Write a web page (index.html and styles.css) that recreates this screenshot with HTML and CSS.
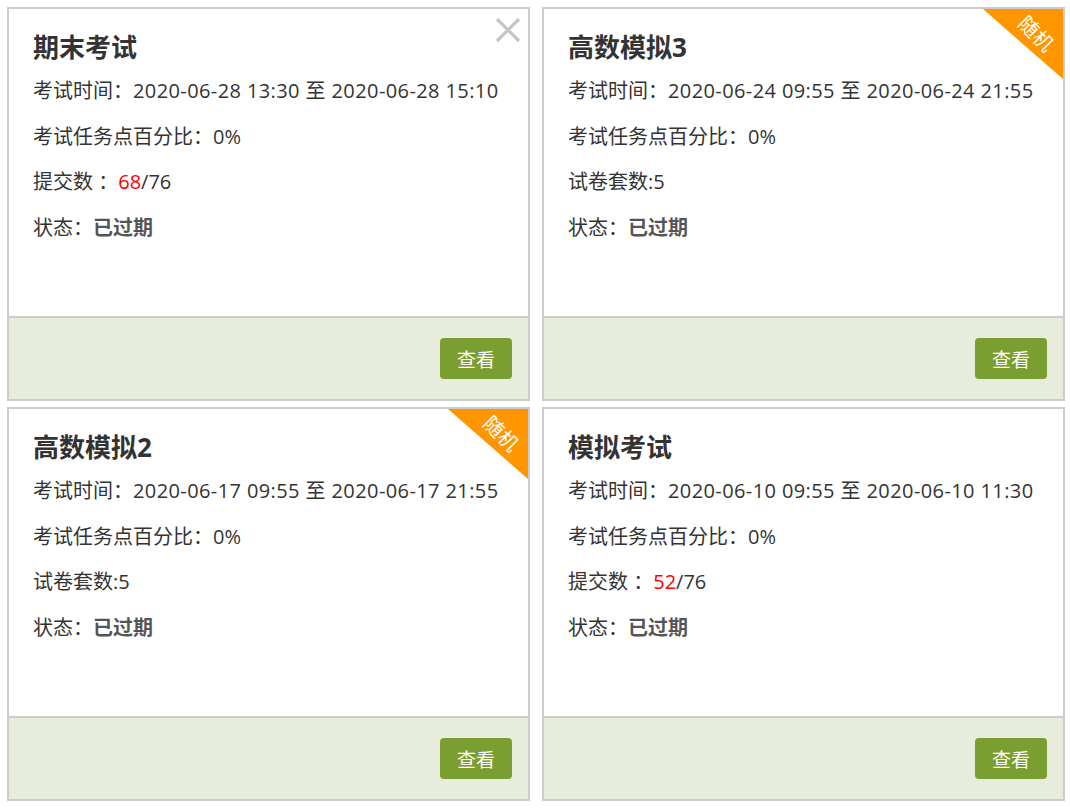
FILE: index.html
```html
<!DOCTYPE html>
<html lang="zh-CN">
<head>
  <meta charset="UTF-8">
  <title>考试列表</title>
  <link rel="stylesheet" href="styles.css">
</head>
<body>

<div class="exam-list">

  <div class="exam-card">
    <div class="exam-body">
      <h3>期末考试</h3>
      <p>考试时间：<span class="time">2020-06-28 13:30 至 2020-06-28 15:10</span></p>
      <p>考试任务点百分比：0%</p>
      <p>提交数 ：<span class="num-red">68</span>/76</p>
      <p>状态：<b>已过期</b></p>
    </div>
    <div class="exam-foot">
      <button class="btn-view">查看</button>
    </div>
    <svg class="btn-close" width="26" height="26" viewBox="0 0 26 26">
      <path d="M2 2 L24 24 M24 2 L2 24" stroke="#c6c6c6" stroke-width="3.2" fill="none"/>
    </svg>
  </div>

  <div class="exam-card">
    <div class="exam-body">
      <h3>高数模拟3</h3>
      <p>考试时间：<span class="time">2020-06-24 09:55 至 2020-06-24 21:55</span></p>
      <p>考试任务点百分比：0%</p>
      <p>试卷套数:5</p>
      <p>状态：<b>已过期</b></p>
    </div>
    <div class="exam-foot">
      <button class="btn-view">查看</button>
    </div>
    <svg class="tag-random" width="80" height="70" viewBox="0 0 80 70">
      <polygon points="0,0 80,0 80,70" fill="#ff9600"/>
      <text x="54" y="24" transform="rotate(45 54 24)">随机</text>
    </svg>
  </div>

  <div class="exam-card">
    <div class="exam-body">
      <h3>高数模拟2</h3>
      <p>考试时间：<span class="time">2020-06-17 09:55 至 2020-06-17 21:55</span></p>
      <p>考试任务点百分比：0%</p>
      <p>试卷套数:5</p>
      <p>状态：<b>已过期</b></p>
    </div>
    <div class="exam-foot">
      <button class="btn-view">查看</button>
    </div>
    <svg class="tag-random" width="80" height="70" viewBox="0 0 80 70">
      <polygon points="0,0 80,0 80,70" fill="#ff9600"/>
      <text x="54" y="24" transform="rotate(45 54 24)">随机</text>
    </svg>
  </div>

  <div class="exam-card">
    <div class="exam-body">
      <h3>模拟考试</h3>
      <p>考试时间：<span class="time">2020-06-10 09:55 至 2020-06-10 11:30</span></p>
      <p>考试任务点百分比：0%</p>
      <p>提交数 ：<span class="num-red">52</span>/76</p>
      <p>状态：<b>已过期</b></p>
    </div>
    <div class="exam-foot">
      <button class="btn-view">查看</button>
    </div>
  </div>

</div>

</body>
</html>
```

FILE: styles.css
```css
body {
  margin: 0;
  padding: 7px;
  font-family: "Open Sans", "Noto Sans CJK SC", sans-serif;
  color: #333;
  background: #fff;
}
.exam-list {
  display: grid;
  grid-template-columns: 523px 523px;
  grid-auto-rows: 394px;
  column-gap: 12px;
  row-gap: 6px;
}
.exam-card {
  position: relative;
  display: flex;
  flex-direction: column;
  border: 2px solid #cccccc;
  background: #fff;
  overflow: hidden;
}
.exam-body {
  flex: 1;
  padding: 20px 24px 0;
}
.exam-body h3 {
  margin: 0 0 13px;
  font-size: 26px;
  line-height: 36px;
  font-weight: bold;
  color: #333;
}
.exam-body p {
  margin: 0 0 19.7px;
  font-size: 20px;
  line-height: 26px;
}
.exam-body .time {
  letter-spacing: 0.4px;
}
.exam-body b {
  color: #555;
}
.num-red {
  color: #ff0000;
}
.exam-foot {
  display: flex;
  justify-content: flex-end;
  height: 83px;
  padding: 20px 16px;
  box-sizing: border-box;
  border-top: 2px solid #cccccc;
  background: #e8ecda;
}
.btn-view {
  width: 72px;
  height: 41px;
  border: none;
  border-radius: 4px;
  background: #7a9e2f;
  color: #fff;
  font-family: "Noto Sans CJK SC", sans-serif;
  font-size: 19px;
  cursor: pointer;
}
.btn-close {
  position: absolute;
  top: 8px;
  right: 7px;
  cursor: pointer;
}
.tag-random {
  position: absolute;
  top: 0;
  right: 0;
}
.tag-random text {
  fill: #fff;
  font-family: "Noto Sans CJK SC", sans-serif;
  font-size: 20px;
  text-anchor: middle;
  dominant-baseline: central;
}
```
